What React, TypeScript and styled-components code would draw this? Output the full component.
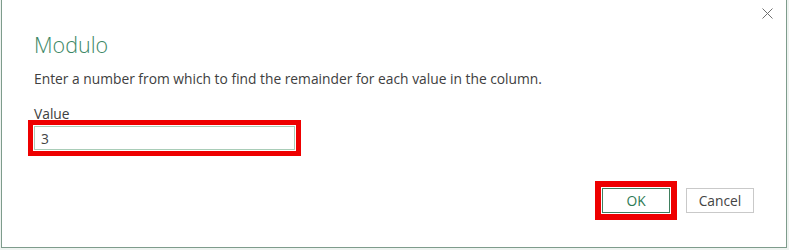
import React from "react";
import styled, { createGlobalStyle } from "styled-components";

const Global = createGlobalStyle`
  html, body {
    margin: 0;
    padding: 0;
    background: #eef3f0;
  }
  body {
    font-family: "Open Sans", "Noto Sans", sans-serif;
  }
  * { box-sizing: border-box; }
`;

const Dialog = styled.div`
  width: 786px;
  margin-left: 1px;
  background: #ffffff;
  border: 1px solid #7e9c8c;
  border-top: none;
  padding: 0 13px 27px 32px;
  display: flex;
  flex-direction: column;
  font-family: "Open Sans", "Noto Sans", sans-serif;
`;

const CloseRow = styled.div`
  display: flex;
  justify-content: flex-end;
  padding-top: 8px;
  height: 19px;
`;

const CloseButton = styled.button`
  width: 11px;
  height: 11px;
  padding: 0;
  border: none;
  background: transparent;
  display: flex;
  cursor: pointer;
`;

const Title = styled.h1`
  margin: 11px 0 0;
  font-size: 21.5px;
  font-weight: 300;
  line-height: 30px;
  color: #3c8765;
`;

const Description = styled.p`
  margin: 9px 0 0;
  font-size: 13.8px;
  line-height: 20px;
  color: #404040;
`;

const Label = styled.label`
  margin-top: 18px;
  font-size: 13.8px;
  line-height: 13px;
  color: #404040;
  display: block;
`;

const Highlight = styled.div<{ $thick: number }>`
  display: inline-flex;
  align-self: flex-start;
  border: ${(p) => p.$thick}px solid #ee0000;
  padding: 1px;
  background: #ffffff;
`;

const InputHighlight = styled(Highlight)`
  margin-left: -6px;
`;

const ValueInput = styled.input`
  width: 261px;
  height: 24px;
  border: 1px solid #a9cdb8;
  padding: 0 6px;
  font-family: "Open Sans", "Noto Sans", sans-serif;
  font-size: 13.8px;
  color: #444444;
  outline: none;
  background: #ffffff;
`;

const ButtonRow = styled.div`
  margin-top: 25px;
  display: flex;
  justify-content: flex-end;
  align-items: center;
  gap: 9px;
  padding-right: 19px;
`;

const Button = styled.button<{ $primary?: boolean }>`
  width: 68px;
  height: 25px;
  padding: 0;
  background: #ffffff;
  border: 1px solid ${(p) => (p.$primary ? "#3f7f5e" : "#c9c9c9")};
  color: ${(p) => (p.$primary ? "#2e7a55" : "#444444")};
  font-family: "Open Sans", "Noto Sans", sans-serif;
  font-size: 13.8px;
  cursor: pointer;
`;

export default function App() {
  return (
    <>
      <Global />
      <Dialog>
        <CloseRow>
          <CloseButton aria-label="Close">
            <svg width="11" height="11" viewBox="0 0 11 11">
              <path d="M0.5 0.5 L10.5 10.5 M10.5 0.5 L0.5 10.5" stroke="#707070" strokeWidth="1" fill="none" />
            </svg>
          </CloseButton>
        </CloseRow>
        <Title>Modulo</Title>
        <Description>
          Enter a number from which to find the remainder for each value in the column.
        </Description>
        <Label htmlFor="value">Value</Label>
        <InputHighlight $thick={5}>
          <ValueInput id="value" defaultValue="3" />
        </InputHighlight>
        <ButtonRow>
          <Highlight $thick={6}>
            <Button $primary>OK</Button>
          </Highlight>
          <Button>Cancel</Button>
        </ButtonRow>
      </Dialog>
    </>
  );
}
